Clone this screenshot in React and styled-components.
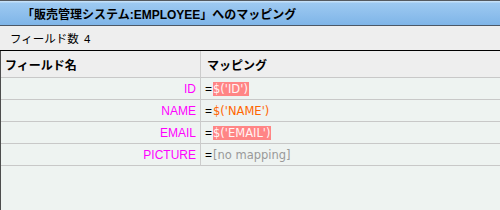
import React from "react";
import styled, { createGlobalStyle } from "styled-components";

const GlobalStyle = createGlobalStyle`
  html, body {
    margin: 0;
    padding: 0;
    background: #eef3f1;
  }
  body {
    font-family: "Liberation Sans", "Noto Sans CJK JP", sans-serif;
    font-size: 12px;
    color: #000;
  }
  * {
    box-sizing: border-box;
  }
`;

const Panel = styled.div`
  width: 500px;
  height: 210px;
  display: flex;
  flex-direction: column;
  overflow: hidden;
`;

const TitleBar = styled.div`
  height: 26px;
  display: flex;
  align-items: center;
  padding-left: 22px;
  border-top: 1px solid #555a60;
  border-bottom: 1px solid #4c5866;
  background: linear-gradient(
    #c4e0f8 0,
    #c4e0f8 1px,
    #9dc9f1 2px,
    #7fb5e8 100%
  );
  font-size: 12px;
  font-weight: bold;
  white-space: nowrap;
`;

const CountBar = styled.div`
  height: 25px;
  display: flex;
  align-items: center;
  padding-left: 10px;
  background: #eeeeee;
  border-bottom: 1px solid #000;
  font-size: 11.5px;
  word-spacing: 2px;
`;

const TableArea = styled.div`
  flex: 1;
  border-left: 1px solid #4d4d4d;
  background: #eef3f1;
`;

const Grid = styled.div`
  display: grid;
  grid-template-columns: 200px 1fr;
`;

const HeadCell = styled.div`
  height: 27px;
  display: flex;
  align-items: center;
  padding-left: ${(p) => (p.$first ? "4px" : "6px")};
  background: #eeeeee;
  font-weight: bold;
  border-bottom: 1px solid #c8c8c8;
  border-right: ${(p) => (p.$first ? "1px solid #cccccc" : "none")};
`;

const NameCell = styled.div`
  height: 22px;
  display: flex;
  align-items: center;
  justify-content: flex-end;
  padding-right: 4px;
  color: #ff00ff;
  border-bottom: 1px solid #c8c8c8;
  border-right: 1px solid #cccccc;
`;

const ValueCell = styled.div`
  height: 22px;
  display: flex;
  align-items: center;
  padding-left: 4px;
  border-bottom: 1px solid #c8c8c8;
  white-space: nowrap;
`;

const Eq = styled.span`
  color: #000;
  margin-right: 1px;
`;

const Expr = styled.span`
  font-family: "DejaVu Sans", sans-serif;
  font-size: 11.5px;
  line-height: 14px;
  padding: 0 1px 0 0;
  color: ${(p) => (p.$hit ? "#fff4f4" : "#ff6600")};
  background: ${(p) => (p.$hit ? "#ff8585" : "transparent")};
`;

const NoMap = styled.span`
  font-family: "DejaVu Sans", sans-serif;
  font-size: 11.5px;
  color: #999999;
`;

const fields = [
  { name: "ID", expr: "$('ID')", hit: true },
  { name: "NAME", expr: "$('NAME')", hit: false },
  { name: "EMAIL", expr: "$('EMAIL')", hit: true },
  { name: "PICTURE", expr: null },
];

const App = () => {
  return (
    <>
      <GlobalStyle />
      <Panel>
        <TitleBar>「販売管理システム:EMPLOYEE」へのマッピング</TitleBar>
        <CountBar>フィールド数 4</CountBar>
        <TableArea>
          <Grid>
            <HeadCell $first>フィールド名</HeadCell>
            <HeadCell>マッピング</HeadCell>
            {fields.map((f) => (
              <React.Fragment key={f.name}>
                <NameCell>{f.name}</NameCell>
                <ValueCell>
                  <Eq>=</Eq>
                  {f.expr ? (
                    <Expr $hit={f.hit}>{f.expr}</Expr>
                  ) : (
                    <NoMap>[no mapping]</NoMap>
                  )}
                </ValueCell>
              </React.Fragment>
            ))}
          </Grid>
        </TableArea>
      </Panel>
    </>
  );
};

export default App;
